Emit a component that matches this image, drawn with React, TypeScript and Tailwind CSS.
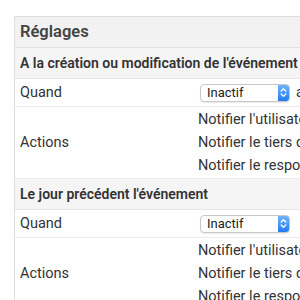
import React from "react";

function Select({ value }: { value: string }) {
  return (
    <div className="flex h-[18px] w-[90px] items-stretch rounded-[4px] border border-[#c8c8c8] bg-white shadow-[0_1px_1px_rgba(0,0,0,0.08)] overflow-hidden">
      <div className="flex flex-1 items-center pl-[6px] text-[13px] leading-none text-[#222]">{value}</div>
      <div className="flex w-[11px] items-center justify-center bg-gradient-to-b from-[#6cb3fa] to-[#1f7cf4]">
        <svg width="7" height="11" viewBox="0 0 7 11" fill="none" stroke="white" strokeWidth="1.3" strokeLinecap="round" strokeLinejoin="round">
          <path d="M1.2 4 L3.5 1.6 L5.8 4" />
          <path d="M1.2 7 L3.5 9.4 L5.8 7" />
        </svg>
      </div>
    </div>
  );
}

function Section({ title, trailing }: { title: string; trailing?: boolean }) {
  return (
    <>
      <div className="flex h-[31px] items-center border-b border-[#e6e6e6] bg-[#f5f5f5] pl-[5px] text-[14px] font-semibold text-[#333]">
        {title}
      </div>
      <div className="flex h-[28px] items-center border-b border-[#ececec] bg-white">
        <div className="w-[184px] pl-[5px] text-[14.5px] text-[#333]">Quand</div>
        <div className="flex items-center gap-[6px] pl-[1px]">
          <Select value="Inactif" />
          {trailing && <span className="text-[14.5px] text-[#333]">avant</span>}
        </div>
      </div>
      <div className="flex h-[72px] items-center border-b border-[#ececec] bg-white">
        <div className="w-[183px] pl-[5px] text-[14.5px] text-[#333]">Actions</div>
        <div className="flex flex-col text-[14.5px] leading-[23px] text-[#333] whitespace-nowrap">
          <span>Notifier l'utilisateur</span>
          <span>Notifier le tiers de l'événement</span>
          <span>Notifier le responsable</span>
        </div>
      </div>
    </>
  );
}

export default function App() {
  return (
    <div className="h-[300px] w-[300px] overflow-hidden bg-white" style={{ fontFamily: 'Roboto, "Liberation Sans", Arial, sans-serif' }}>
      <div className="ml-[14px] mt-[16px] w-[700px] border border-[#dedede]">
        <div className="flex h-[31px] items-center border-b border-[#e0e0e0] bg-[#f2f2f2] pl-[5px] text-[16.5px] font-semibold text-[#444]">
          Réglages
        </div>
        <Section title="A la création ou modification de l'événement" trailing />
        <Section title="Le jour précédent l'événement" />
      </div>
    </div>
  );
}
